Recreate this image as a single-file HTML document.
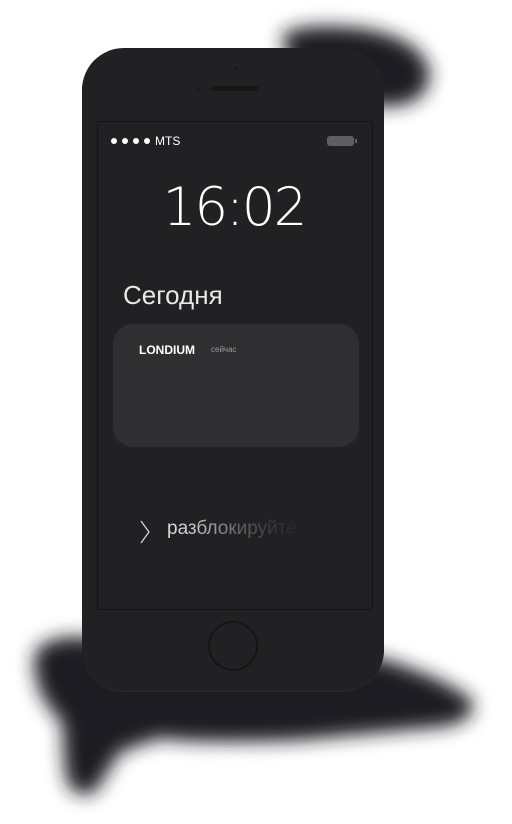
<!DOCTYPE html>
<html><head><meta charset="utf-8"><style>
html,body{margin:0;padding:0;background:#fff;width:512px;height:824px;overflow:hidden;position:relative;font-family:"Liberation Sans","DejaVu Sans",sans-serif}
svg.bg{position:absolute;left:0;top:0}
.phone{position:absolute;left:82px;top:48px;width:302px;height:643px;background:#212123;border-radius:42px;box-shadow:0 1px 0 #2a2a2c}
.screen{position:absolute;left:15px;top:73px;width:274px;height:487px;background:#212123;border:1px solid #141415}
.speaker{position:absolute;left:130px;top:38px;width:47px;height:5px;border-radius:3px;background:#161617}
.cam{position:absolute;left:152px;top:19px;width:4px;height:4px;border-radius:2px;background:#1a1a1b}
.cam2{position:absolute;left:114px;top:39px;width:4px;height:4px;border-radius:2px;background:#1a1a1b}
.home{position:absolute;left:126px;top:573px;width:50px;height:50px;border-radius:50%;border:2px solid #151516;box-sizing:border-box}
.status{position:absolute;left:13px;top:12px;color:#fff;font-size:12px}
.status i{display:inline-block;width:6px;height:6px;border-radius:50%;background:#fff;margin-right:5px;vertical-align:1px}
.batt{position:absolute;left:229px;top:14px;width:27px;height:10px;border-radius:3px;background:#5f5f62}
.batt:after{content:"";position:absolute;right:-3px;top:3px;width:2px;height:4px;background:#5f5f62}
.time{position:absolute;left:0;width:274px;top:55px;text-align:center;color:#fff;font-size:53px;letter-spacing:-2px;font-family:"DejaVu Sans","Liberation Sans",sans-serif;font-weight:200;text-indent:-2px}
.today{position:absolute;left:25px;top:158px;color:#e8e8e8;font-size:26px;font-weight:300}
.card{position:absolute;left:15px;top:202px;width:246px;height:123px;background:#2f2f31;border-radius:20px}
.card b{position:absolute;left:26px;top:19px;color:#fff;font-size:12px}
.card s{text-decoration:none;position:absolute;left:98px;top:21px;color:#9a9a9a;font-size:8px}
.unlock{position:absolute;left:69px;top:396px;font-size:19px;background:linear-gradient(90deg,#ddd 0,#ccc 25px,#666 70px,#3a3a3c 105px,#262628 130px);-webkit-background-clip:text;background-clip:text;color:transparent}
</style></head><body>
<svg class="bg" width="512" height="824"><defs><filter id="b" x="-20%" y="-20%" width="140%" height="140%"><feGaussianBlur stdDeviation="9"/></filter></defs>
<g fill="#1f1f21" filter="url(#b)">
<path d="M282 35 Q300 22 360 28 Q425 38 430 75 Q427 102 395 106 Q360 108 330 92 Q288 75 282 35Z"/>
<path d="M35 652 Q55 628 110 642 L380 658 Q445 678 472 700 Q478 722 440 727 L300 740 Q200 744 160 738 L120 752 L95 792 Q70 802 65 772 L62 722 Q30 692 35 652Z"/>
</g></svg>
<div class="phone">
<div class="cam"></div><div class="cam2"></div><div class="speaker"></div>
<div class="screen">
<div class="status"><i></i><i></i><i></i><i></i>MTS</div>
<div class="batt"></div>
<div class="time">16:02</div>
<div class="today">Сегодня</div>
<div class="card"><b>LONDIUM</b><s>сейчас</s></div>
<svg style="position:absolute;left:41px;top:398px" width="12" height="24"><path d="M2 1 L10 12 L2 23" stroke="#ddd" stroke-width="1.2" fill="none"/></svg>
<div class="unlock">разблокируйте</div>
</div>
<div class="home"></div>
</div>
</body></html>
